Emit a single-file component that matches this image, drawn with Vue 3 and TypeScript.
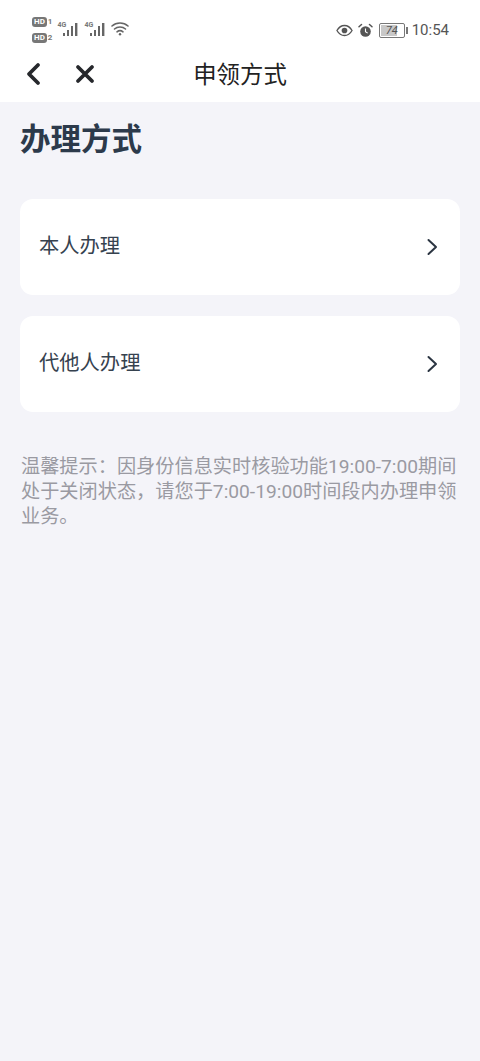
<script setup lang="ts">
const rows: string[] = ['本人办理', '代他人办理']
</script>

<template>
  <div class="page">
    <header class="top">
      <div class="status">
        <div class="status-left">
          <div class="hd-stack">
            <div class="hd-row"><span class="hd">HD</span><span class="sim">1</span></div>
            <div class="hd-row"><span class="hd">HD</span><span class="sim">2</span></div>
          </div>
          <div class="signal">
            <span class="net">4G</span>
            <svg width="22" height="14" viewBox="0 0 22 14"><g fill="#666"><rect x="6" y="11" width="2" height="3" /><rect x="10" y="8" width="2" height="6" /><rect x="14" y="4" width="2" height="10" /><rect x="18" y="1" width="2.400" height="13" /></g></svg>
          </div>
          <div class="signal">
            <span class="net">4G</span>
            <svg width="22" height="14" viewBox="0 0 22 14"><g fill="#666"><rect x="6" y="11" width="2" height="3" /><rect x="10" y="8" width="2" height="6" /><rect x="14" y="4" width="2" height="10" /><rect x="18" y="1" width="2.400" height="13" /></g></svg>
          </div>
          <svg class="wifi" width="18" height="15" viewBox="0 0 18 15" fill="none" stroke="#666" stroke-width="1.600" stroke-linecap="round"><path d="M1 5c4.500-4 11.500-4 16 0" /><path d="M3.500 8c3-2.600 8-2.600 11 0" /><path d="M6 10.800c1.700-1.300 4.300-1.300 6 0" /><circle cx="9" cy="13.300" r="1.200" fill="#666" stroke="none" /></svg>
        </div>
        <div class="status-right">
          <svg width="17" height="13" viewBox="0 0 18 13" fill="none"><path d="M1 6.500C3 3 5.800 1.200 9 1.200s6 1.800 8 5.300c-2 3.500-4.800 5.300-8 5.300S3 10 1 6.500z" stroke="#555" stroke-width="1.400" /><circle cx="9" cy="6.500" r="3" fill="#555" /></svg>
          <svg width="15" height="15" viewBox="0 0 15 15"><circle cx="7.500" cy="8.500" r="5.300" fill="#555" /><path d="M7.500 5.500v3.200l2.200 1.400" stroke="#fff" stroke-width="1.100" fill="none" /><path d="M1 3.800 3.500 1.500M14 3.800l-2.500-2.300" stroke="#555" stroke-width="1.500" stroke-linecap="round" /></svg>
          <div class="battery">
            <div class="shell"><div class="fill"></div><span class="level">74</span></div>
            <div class="cap"></div>
          </div>
          <span class="time">10:54</span>
        </div>
      </div>
      <nav class="nav">
        <svg class="back" width="18" height="24" viewBox="0 0 18 24" fill="none" stroke="#26282c" stroke-width="3.800" stroke-linecap="round" stroke-linejoin="round"><path d="M14 3 5 12l9 9" /></svg>
        <svg class="close" width="20" height="20" viewBox="0 0 20 20" fill="none" stroke="#26282c" stroke-width="3.800" stroke-linecap="round"><path d="M3 3l14 14M17 3 3 17" /></svg>
        <h1 class="nav-title">申领方式</h1>
      </nav>
    </header>
    <main class="content">
      <h2 class="title">办理方式</h2>
      <div class="row" v-for="r in rows" :key="r">
        <span class="row-label">{{ r }}</span>
        <svg width="12" height="18" viewBox="0 0 12 18" fill="none" stroke="#2b3542" stroke-width="2" stroke-linecap="round" stroke-linejoin="round"><path d="M2.500 2 10 9l-7.500 7" /></svg>
      </div>
      <p class="note">温馨提示：因身份信息实时核验功能19:00-7:00期间处于关闭状态，请您于7:00-19:00时间段内办理申领业务。</p>
    </main>
  </div>
</template>

<style>
html, body { margin: 0; background: #f4f4f9; }
</style>

<style scoped>
.page {
  width: 480px;
  height: 1061px;
  overflow: hidden;
  background: #f4f4f9;
  font-family: "Roboto", "Noto Sans CJK SC", sans-serif;
}
.top { background: #fff; height: 102px; }
.status {
  height: 52px;
  padding: 13px 31px 0 32px;
  box-sizing: border-box;
  display: flex;
  justify-content: space-between;
  align-items: flex-start;
}
.status-left { display: flex; align-items: flex-start; gap: 5px; }
.hd-stack { display: flex; flex-direction: column; gap: 6px; margin-top: 4px; }
.hd-row { display: flex; gap: 1px; align-items: center; height: 10px; }
.hd {
  background: #777;
  color: #fff;
  font-size: 8px;
  font-weight: 700;
  line-height: 10px;
  padding: 0 2px;
  border-radius: 3px;
}
.sim { color: #777; font-size: 8px; line-height: 10px; font-weight: 700; }
.signal { position: relative; margin-top: 9px; width: 22px; height: 14px; display: flex; justify-content: flex-end; }
.net { position: absolute; left: 0; top: -1px; font-size: 7px; line-height: 8px; color: #777; font-weight: 700; }
.wifi { margin-top: 8px; }
.status-right { display: flex; align-items: center; gap: 5px; margin-top: 8px; color: #555; }
.battery { display: flex; align-items: center; gap: 1px; margin-left: 1px; }
.shell {
  position: relative;
  width: 22px;
  height: 11px;
  border: 1px solid #777;
  border-radius: 2px;
  padding: 1px;
  box-sizing: content-box;
  overflow: hidden;
}
.fill { width: 74%; height: 100%; background: #c8c8c8; }
.level {
  position: absolute;
  inset: 0;
  text-align: center;
  font-size: 11px;
  line-height: 13px;
  font-style: italic;
  color: #555;
}
.cap { width: 2px; height: 7px; background: #777; }
.time { font-size: 15px; line-height: 18px; margin-left: -1px; color: #555; }
.nav { height: 50px; display: flex; align-items: center; position: relative; padding-left: 24px; }
.back { margin-top: -6px; }
.close { margin-left: 33px; margin-top: -6px; }
.nav-title {
  position: absolute;
  left: 0;
  right: 0;
  top: 7px;
  margin: 0;
  text-align: center;
  font-size: 23.400px;
  font-weight: 400;
  line-height: 32px;
  color: #222;
}
.content { padding: 0 20px; }
.title {
  margin: 18px 0 40px;
  font-size: 30.500px;
  line-height: 40px;
  font-weight: 700;
  color: #2c3a4b;
  height: 39px;
}
.row {
  height: 96px;
  background: #fff;
  border-radius: 13px;
  margin-bottom: 21px;
  display: flex;
  align-items: center;
  justify-content: space-between;
  padding: 0 22px 0 19px;
}
.row-label { font-size: 20.300px; line-height: 24px; margin-top: -2px; font-weight: 400; color: #36424f; }
.note {
  margin: 42px 0 0;
  padding-left: 1px;
  font-size: 19.200px;
  line-height: 25px;
  color: #9a9aa2;
}
</style>
